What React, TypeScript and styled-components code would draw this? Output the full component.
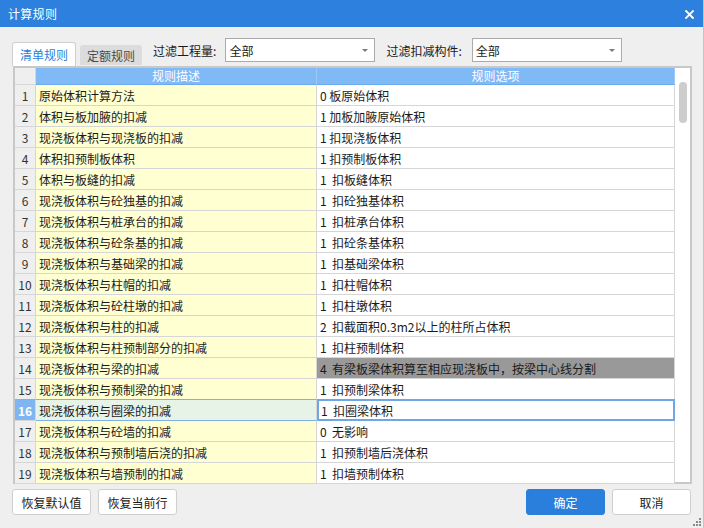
import styled, { createGlobalStyle } from 'styled-components';

const GlobalStyle = createGlobalStyle`
  html, body {
    margin: 0;
    padding: 0;
    background: #efefef;
  }
  body {
    font-family: 'Noto Sans CJK SC', 'Microsoft YaHei', sans-serif;
    font-size: 12px;
    color: #1a1a1a;
  }
`;

const Window = styled.div`
  width: 704px;
  height: 528px;
  background: #efefef;
  display: flex;
  flex-direction: column;
  position: relative;
  overflow: hidden;
  box-sizing: border-box;
  border-right: 1px solid #c4c4c4;
`;

const TitleBar = styled.div`
  height: 27px;
  background: #2d80dd;
  display: flex;
  align-items: center;
  justify-content: space-between;
  padding: 0 9px 0 8px;
  color: #fff;
  flex-shrink: 0;
`;

const Title = styled.span`
  font-size: 12px;
  letter-spacing: 0.3px;
`;

const CloseBtn = styled.svg`
  width: 9px;
  height: 9px;
  margin-top: 1px;
`;

const Toolbar = styled.div`
  height: 39px;
  display: flex;
  align-items: flex-end;
  padding: 0 12px;
  box-sizing: border-box;
`;

const Tab = styled.div<{ active?: boolean }>`
  height: ${(p) => (p.active ? '23px' : '19px')};
  padding: 0 ${(p) => (p.active ? '7px' : '6px')};
  margin-right: 4px;
  margin-bottom: ${(p) => (p.active ? '0' : '1px')};
  display: flex;
  align-items: center;
  background: ${(p) => (p.active ? '#fff' : '#dcdcdc')};
  color: ${(p) => (p.active ? '#2b7fd9' : '#4a4a4a')};
  border: 1px solid ${(p) => (p.active ? '#cfcfcf' : '#dcdcdc')};
  border-bottom: none;
  border-radius: 3px 3px 0 0;
  font-size: 12px;
`;

const FilterGroup = styled.div`
  display: flex;
  align-items: center;
  align-self: flex-start;
  margin-top: 11px;
  margin-left: 7px;
`;

const FilterLabel = styled.span<{ space: number }>`
  margin-right: ${(p) => p.space}px;
  font-size: 12px;
  color: #1a1a1a;
`;

const Select = styled.div`
  width: 150px;
  height: 24px;
  box-sizing: border-box;
  border: 1px solid #ababab;
  background: #fff;
  display: flex;
  align-items: center;
  justify-content: space-between;
  padding: 0 6px 0 3px;
  margin-right: 11px;
`;

const Caret = styled.span`
  width: 0;
  height: 0;
  border-left: 3px solid transparent;
  border-right: 3px solid transparent;
  border-top: 3px solid #7a7a7a;
`;

const TableBox = styled.div`
  margin: 0 11px 0 13px;
  height: 418px;
  border: 2px solid #c8c8c8;
  box-sizing: border-box;
  background: #fff;
  display: flex;
`;

const Grid = styled.div`
  flex: 1;
  display: flex;
  flex-direction: column;
`;

const Row = styled.div`
  display: grid;
  grid-template-columns: 21px 281px 1fr;
`;

const HeaderCell = styled.div<{ blank?: boolean }>`
  height: 17px;
  box-sizing: border-box;
  background: ${(p) => (p.blank ? '#efefef' : '#7fbaf6')};
  border-right: 1px solid ${(p) => (p.blank ? '#d6d6d6' : '#9cc9f7')};
  border-bottom: 1px solid ${(p) => (p.blank ? '#d6d6d6' : '#6aaaf0')};
  color: #fff;
  display: flex;
  align-items: center;
  justify-content: center;
  font-size: 12px;
  line-height: 1;
`;

const NumCell = styled.div<{ current?: boolean }>`
  box-sizing: border-box;
  background: ${(p) => (p.current ? '#7fb6f1' : '#efefef')};
  color: ${(p) => (p.current ? '#fff' : '#333')};
  font-weight: ${(p) => (p.current ? 700 : 400)};
  border-right: 1px solid #d6d6d6;
  border-bottom: 1px solid #d6d6d6;
  border-top: ${(p) => (p.current ? '1px solid #7fb0e8' : 'none')};
  margin-top: ${(p) => (p.current ? '-1px' : '0')};
  height: ${(p) => (p.current ? '22px' : '21px')};
  display: flex;
  align-items: center;
  justify-content: center;
  font-size: 12px;
`;

const DescCell = styled.div<{ current?: boolean }>`
  box-sizing: border-box;
  background: ${(p) => (p.current ? '#e8f3e8' : '#ffffd2')};
  border-right: 1px solid #d6d6d6;
  border-bottom: 1px solid ${(p) => (p.current ? '#7fb0e8' : '#d6d6d6')};
  border-top: ${(p) => (p.current ? '1px solid #7fb0e8' : 'none')};
  margin-top: ${(p) => (p.current ? '-1px' : '0')};
  height: ${(p) => (p.current ? '22px' : '21px')};
  padding-left: 3px;
  display: flex;
  align-items: center;
  white-space: nowrap;
`;

const OptCell = styled.div<{ selected?: boolean; current?: boolean }>`
  box-sizing: border-box;
  background: ${(p) => (p.selected ? '#999999' : '#fff')};
  border-right: 1px solid #d6d6d6;
  border-bottom: 1px solid #d6d6d6;
  height: 21px;
  padding-left: 3px;
  display: flex;
  align-items: center;
  white-space: pre;
  ${(p) =>
    p.current &&
    `
    border: 2px solid #6fa6e6;
    margin-top: -1px;
    height: 22px;
    padding-left: 2px;
  `}
`;

const ScrollTrack = styled.div`
  width: 15px;
  flex-shrink: 0;
  background: #fff;
  display: flex;
  justify-content: center;
`;

const ScrollThumb = styled.div`
  width: 8px;
  height: 41px;
  margin-top: 14px;
  border-radius: 4px;
  background: #cdcdcd;
`;

const Footer = styled.div`
  display: flex;
  align-items: center;
  padding: 5px 12px 0 12px;
  gap: 7px;
`;

const Spacer = styled.div`
  flex: 1;
`;

const Button = styled.div<{ primary?: boolean }>`
  width: 79px;
  height: 26px;
  box-sizing: border-box;
  border-radius: 3px;
  border: 1px solid ${(p) => (p.primary ? '#2b7fdc' : '#cfcfcf')};
  background: ${(p) => (p.primary ? '#2b7fdc' : '#fff')};
  color: ${(p) => (p.primary ? '#fff' : '#1a1a1a')};
  display: flex;
  align-items: center;
  justify-content: center;
  font-size: 12px;
`;

const Grip = styled.svg`
  position: absolute;
  right: 2px;
  bottom: 2px;
  width: 9px;
  height: 9px;
`;

interface RuleRow {
  desc: string;
  opt: string;
}

const rows: RuleRow[] = [
  { desc: '原始体积计算方法', opt: '0 板原始体积' },
  { desc: '体积与板加腋的扣减', opt: '1 加板加腋原始体积' },
  { desc: '现浇板体积与现浇板的扣减', opt: '1 扣现浇板体积' },
  { desc: '体积扣预制板体积', opt: '1 扣预制板体积' },
  { desc: '体积与板缝的扣减', opt: '1  扣板缝体积' },
  { desc: '现浇板体积与砼独基的扣减', opt: '1  扣砼独基体积' },
  { desc: '现浇板体积与桩承台的扣减', opt: '1  扣桩承台体积' },
  { desc: '现浇板体积与砼条基的扣减', opt: '1  扣砼条基体积' },
  { desc: '现浇板体积与基础梁的扣减', opt: '1  扣基础梁体积' },
  { desc: '现浇板体积与柱帽的扣减', opt: '1  扣柱帽体积' },
  { desc: '现浇板体积与砼柱墩的扣减', opt: '1  扣柱墩体积' },
  { desc: '现浇板体积与柱的扣减', opt: '2  扣截面积0.3m2以上的柱所占体积' },
  { desc: '现浇板体积与柱预制部分的扣减', opt: '1  扣柱预制体积' },
  { desc: '现浇板体积与梁的扣减', opt: '4  有梁板梁体积算至相应现浇板中，按梁中心线分割' },
  { desc: '现浇板体积与预制梁的扣减', opt: '1  扣预制梁体积' },
  { desc: '现浇板体积与圈梁的扣减', opt: '1  扣圈梁体积' },
  { desc: '现浇板体积与砼墙的扣减', opt: '0  无影响' },
  { desc: '现浇板体积与预制墙后浇的扣减', opt: '1  扣预制墙后浇体积' },
  { desc: '现浇板体积与墙预制的扣减', opt: '1  扣墙预制体积' },
];

const SELECTED = 14;
const CURRENT = 16;

const App = () => {
  return (
    <Window>
      <GlobalStyle />
      <TitleBar>
        <Title>计算规则</Title>
        <CloseBtn viewBox='0 0 9 9'>
          <path d='M1 1 L8 8 M8 1 L1 8' stroke='#fff' strokeWidth='1.8' strokeLinecap='square' />
        </CloseBtn>
      </TitleBar>
      <Toolbar>
        <Tab active>清单规则</Tab>
        <Tab>定额规则</Tab>
        <FilterGroup>
          <FilterLabel space={9}>过滤工程量:</FilterLabel>
          <Select>
            <span>全部</span>
            <Caret />
          </Select>
          <FilterLabel space={10}>过滤扣减构件:</FilterLabel>
          <Select>
            <span>全部</span>
            <Caret />
          </Select>
        </FilterGroup>
      </Toolbar>
      <TableBox>
        <Grid>
          <Row>
            <HeaderCell blank />
            <HeaderCell>规则描述</HeaderCell>
            <HeaderCell>规则选项</HeaderCell>
          </Row>
          {rows.map((r, i) => {
            const n = i + 1;
            return (
              <Row key={n}>
                <NumCell current={n === CURRENT}>{n}</NumCell>
                <DescCell current={n === CURRENT}>{r.desc}</DescCell>
                <OptCell selected={n === SELECTED} current={n === CURRENT}>
                  {r.opt}
                </OptCell>
              </Row>
            );
          })}
        </Grid>
        <ScrollTrack>
          <ScrollThumb />
        </ScrollTrack>
      </TableBox>
      <Footer>
        <Button>恢复默认值</Button>
        <Button>恢复当前行</Button>
        <Spacer />
        <Button primary>确定</Button>
        <Button>取消</Button>
      </Footer>
      <Grip viewBox='0 0 9 9'>
        <rect x='7' y='1' width='2' height='2' fill='#8a8a8a' />
        <rect x='4' y='4' width='2' height='2' fill='#8a8a8a' />
        <rect x='7' y='4' width='2' height='2' fill='#8a8a8a' />
        <rect x='1' y='7' width='2' height='2' fill='#8a8a8a' />
        <rect x='4' y='7' width='2' height='2' fill='#8a8a8a' />
        <rect x='7' y='7' width='2' height='2' fill='#8a8a8a' />
      </Grip>
    </Window>
  );
};

export default App;
